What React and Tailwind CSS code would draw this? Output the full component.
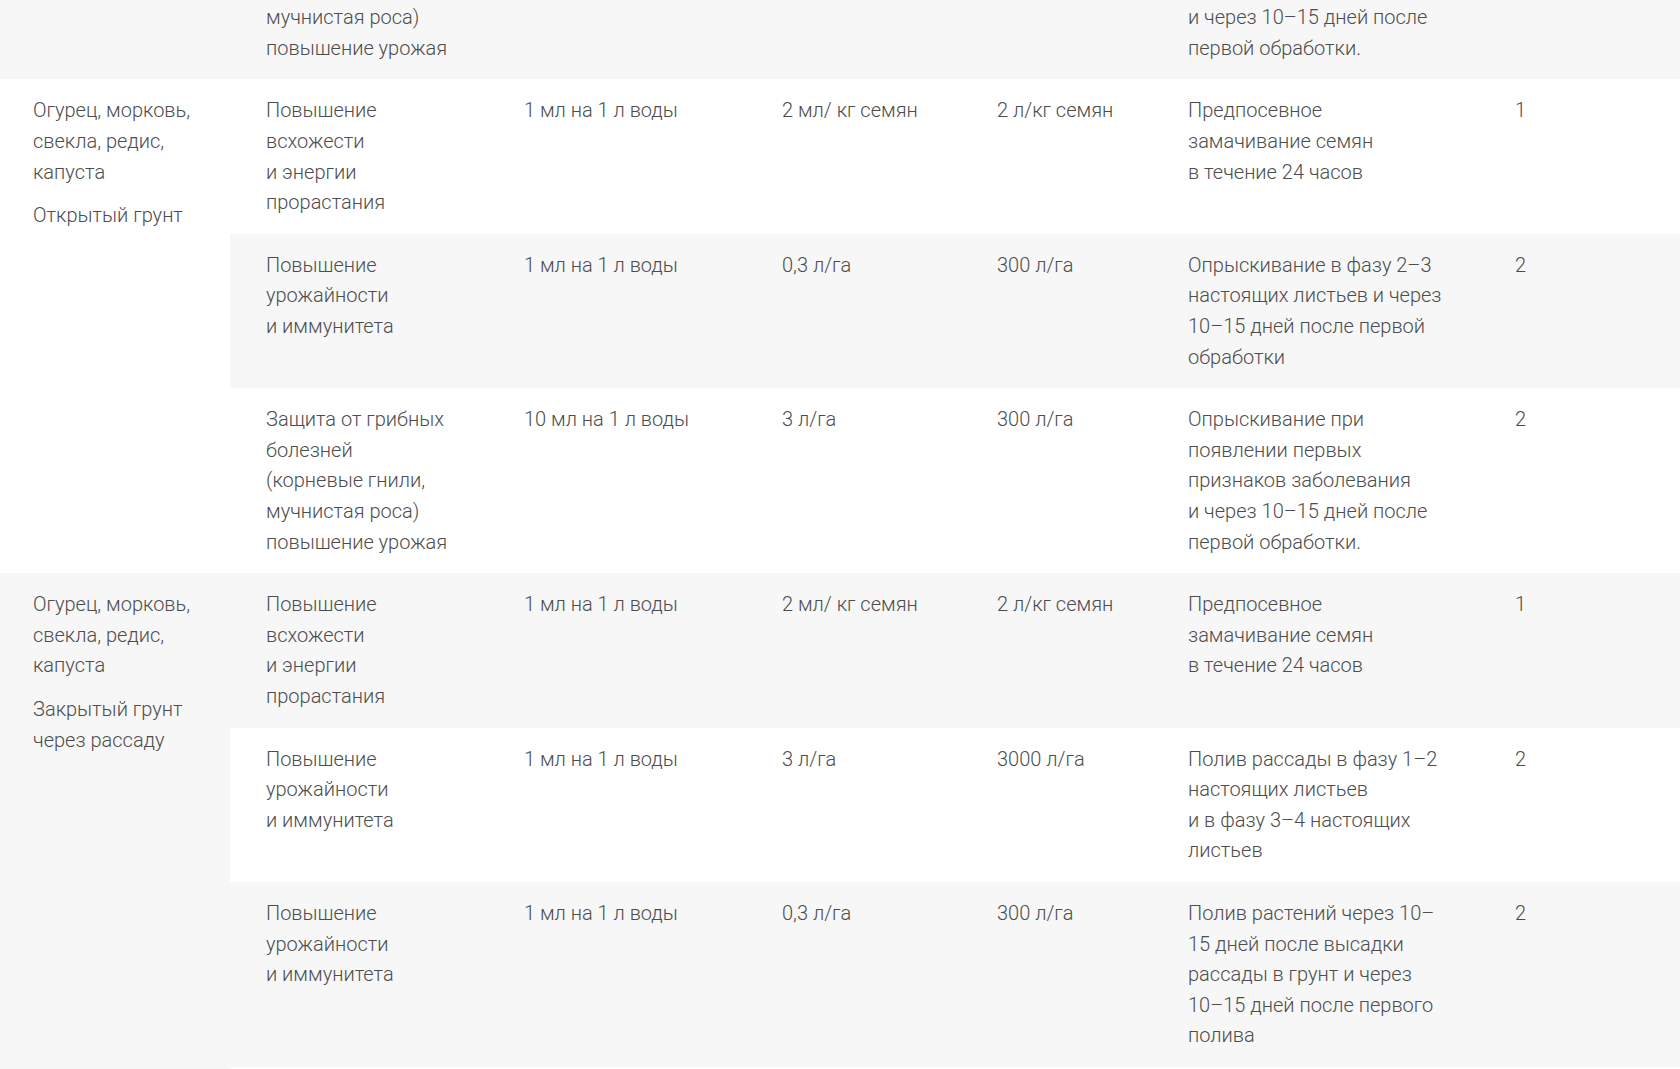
import React from 'react';

const GRAY = 'bg-[#f7f7f7]';
const WHITE = 'bg-white';

// один ряд с обработкой
const Row = ({ bg, cells }) => (
  <div className={`${bg} grid grid-cols-[258px_258px_215px_191px_327px_1fr] pl-[36px] py-4`}>
    {cells.map((lines, i) => (
      <div key={i}>
        {lines.map((l, j) => (
          <div key={j} className="whitespace-nowrap">{l}</div>
        ))}
      </div>
    ))}
  </div>
);

const Group = ({ bg, culture, soil, rows }) => (
  <div className="flex">
    <div className={`${bg} w-[230px] shrink-0 pl-[33px] py-4`}>
      {culture.map((l, i) => (
        <div key={i}>{l}</div>
      ))}
      <div className="mt-[13px]">
        {soil.map((l, i) => (
          <div key={i}>{l}</div>
        ))}
      </div>
    </div>
    <div className="flex-1 flex flex-col">
      {rows.map((r, i) => (
        <Row key={i} bg={r.bg} cells={r.cells} />
      ))}
    </div>
  </div>
);

const protect = {
  cells: [
    ['Защита от грибных', 'болезней', '(корневые гнили,', 'мучнистая роса)', 'повышение урожая'],
    ['10 мл на 1 л воды'],
    ['3 л/га'],
    ['300 л/га'],
    ['Опрыскивание при', 'появлении первых', 'признаков заболевания', 'и через 10–15 дней после', 'первой обработки.'],
    ['2'],
  ],
};

const seeds = {
  cells: [
    ['Повышение', 'всхожести', 'и энергии', 'прорастания'],
    ['1 мл на 1 л воды'],
    ['2 мл/ кг семян'],
    ['2 л/кг семян'],
    ['Предпосевное', 'замачивание семян', 'в течение 24 часов'],
    ['1'],
  ],
};

const App = () => {
  return (
    <div className="min-h-screen bg-white overflow-hidden text-[20px] leading-[30.6px] font-light text-[#4d4d4d] font-['Roboto','Liberation_Sans',sans-serif]">
      {/* хвост предыдущей группы */}
      <div className={`${GRAY} mt-[-105.5px] pl-[230px]`}>
        <Row bg={GRAY} cells={protect.cells} />
      </div>

      <Group
        bg={WHITE}
        culture={['Огурец, морковь,', 'свекла, редис,', 'капуста']}
        soil={['Открытый грунт']}
        rows={[
          { bg: WHITE, ...seeds },
          {
            bg: GRAY,
            cells: [
              ['Повышение', 'урожайности', 'и иммунитета'],
              ['1 мл на 1 л воды'],
              ['0,3 л/га'],
              ['300 л/га'],
              ['Опрыскивание в фазу 2–3', 'настоящих листьев и через', '10–15 дней после первой', 'обработки'],
              ['2'],
            ],
          },
          { bg: WHITE, ...protect },
        ]}
      />

      <Group
        bg={GRAY}
        culture={['Огурец, морковь,', 'свекла, редис,', 'капуста']}
        soil={['Закрытый грунт', 'через рассаду']}
        rows={[
          { bg: GRAY, ...seeds },
          {
            bg: WHITE,
            cells: [
              ['Повышение', 'урожайности', 'и иммунитета'],
              ['1 мл на 1 л воды'],
              ['3 л/га'],
              ['3000 л/га'],
              ['Полив рассады в фазу 1–2', 'настоящих листьев', 'и в фазу 3–4 настоящих', 'листьев'],
              ['2'],
            ],
          },
          {
            bg: GRAY,
            cells: [
              ['Повышение', 'урожайности', 'и иммунитета'],
              ['1 мл на 1 л воды'],
              ['0,3 л/га'],
              ['300 л/га'],
              ['Полив растений через 10–', '15 дней после высадки', 'рассады в грунт и через', '10–15 дней после первого', 'полива'],
              ['2'],
            ],
          },
          { bg: WHITE, cells: [[], [], [], [], [], []] },
        ]}
      />
    </div>
  );
};

export default App;
